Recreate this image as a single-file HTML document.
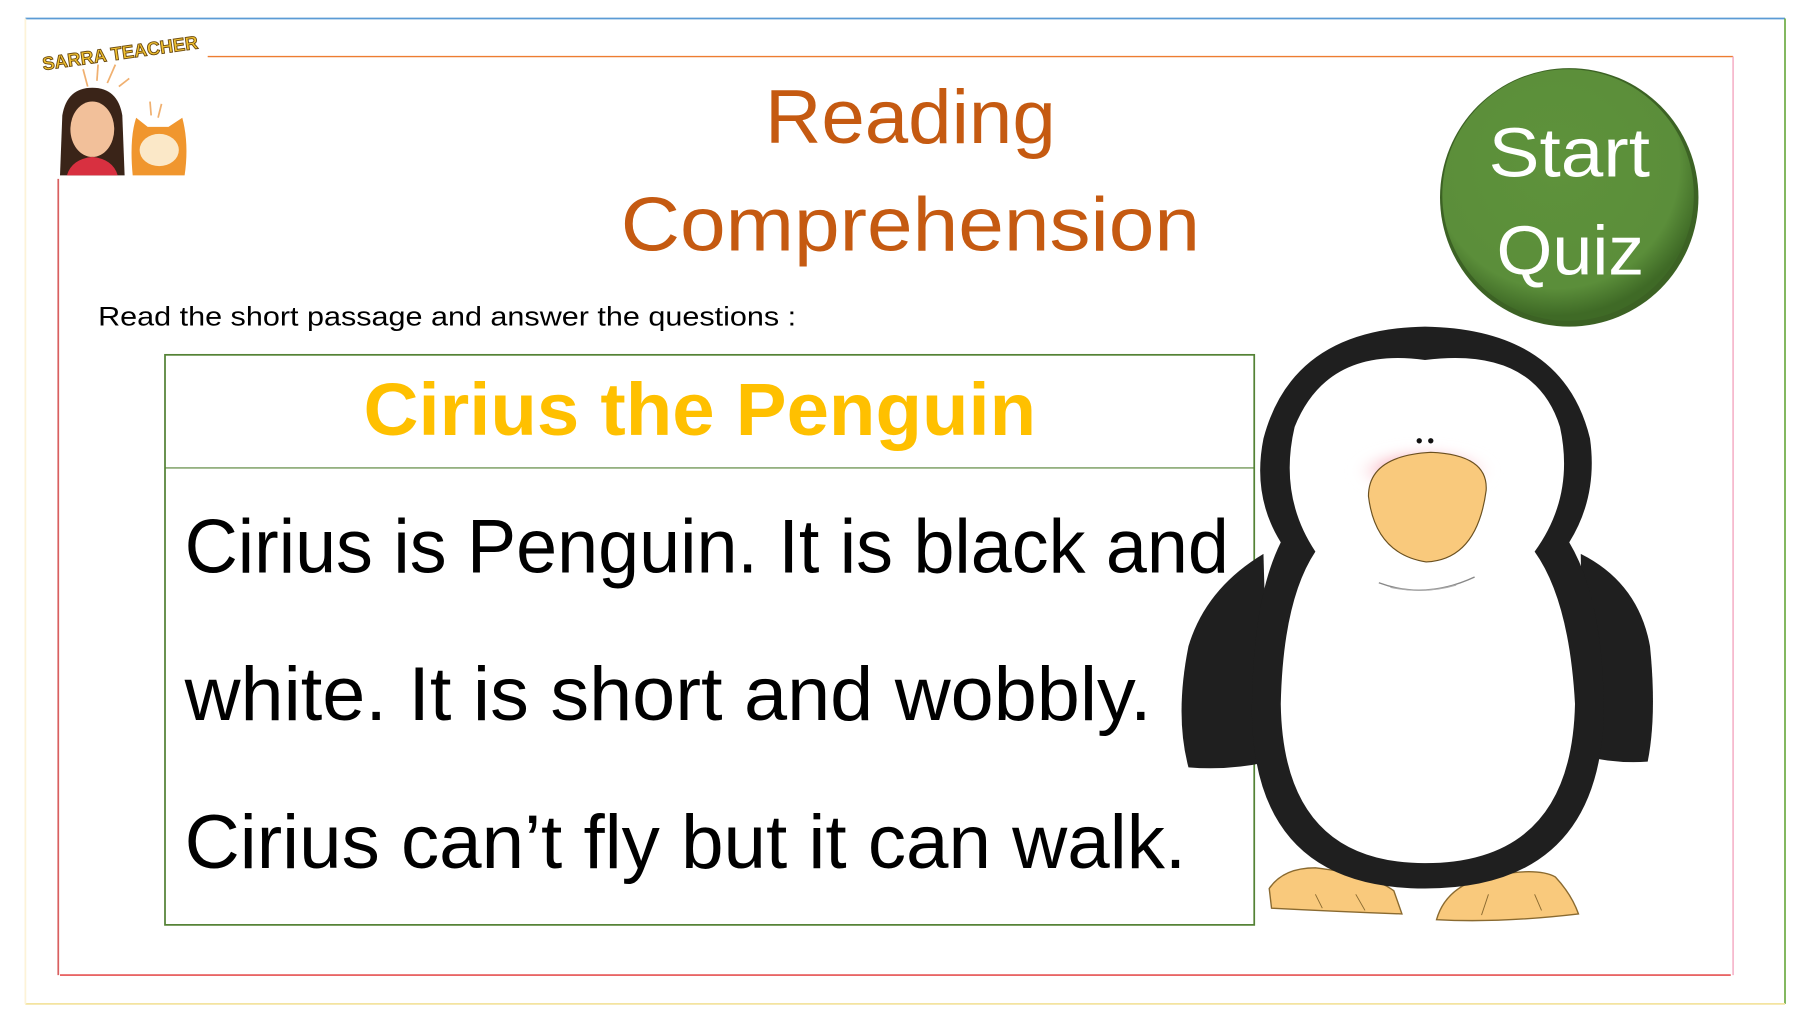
<!DOCTYPE html>
<html><head><meta charset="utf-8"><style>
html,body{margin:0;padding:0;background:#fff;}
svg{display:block;}
text{font-family:"Liberation Sans",sans-serif;}
</style></head><body>
<svg width="1800" height="1012" viewBox="0 0 1560 877" preserveAspectRatio="none" xmlns="http://www.w3.org/2000/svg">
<defs>
<radialGradient id="btn" cx="45%" cy="38%" r="60%">
<stop offset="0" stop-color="#5e923b"/><stop offset="0.82" stop-color="#5b8e3a"/><stop offset="1" stop-color="#3f6a26"/>
</radialGradient>
<radialGradient id="blush" cx="50%" cy="50%" r="50%">
<stop offset="0" stop-color="#f0607a" stop-opacity="1"/><stop offset="0.6" stop-color="#f7a0b0" stop-opacity="0.6"/><stop offset="1" stop-color="#ffffff" stop-opacity="0"/>
</radialGradient>
<filter id="bl" x="-30%" y="-60%" width="160%" height="220%"><feGaussianBlur stdDeviation="5"/></filter>
</defs>
<rect width="1560" height="877" fill="#fff"/>
<line x1="22" y1="16" x2="1547" y2="16" stroke="#5b9bd5" stroke-width="1.5"/>
<line x1="1547" y1="16" x2="1547" y2="870" stroke="#70ad47" stroke-width="1.5"/>
<line x1="22" y1="870" x2="1547" y2="870" stroke="#f4e4a0" stroke-width="1.5"/>
<line x1="22" y1="16" x2="22" y2="870" stroke="#fdf3d8" stroke-width="1.5"/>
<line x1="180" y1="49" x2="1502" y2="49" stroke="#ed7d31" stroke-width="1.2"/>
<line x1="1502" y1="49" x2="1502" y2="845" stroke="#f4a6c0" stroke-width="1.2"/>
<line x1="52" y1="845" x2="1500" y2="845" stroke="#e03030" stroke-width="1.2"/>
<line x1="50.5" y1="155" x2="50.5" y2="845" stroke="#d96060" stroke-width="1.5"/>
<text x="36" y="52" font-size="16" font-weight="bold" fill="#f2c230" stroke="#6b4a10" stroke-width="0.8" transform="rotate(-8 100 45)" textLength="136" lengthAdjust="spacingAndGlyphs">SARRA TEACHER</text>
<g stroke="#f0b070" stroke-width="1.5"><line x1="72" y1="60" x2="76" y2="75"/><line x1="85" y1="56" x2="84" y2="70"/><line x1="100" y1="56" x2="93" y2="72"/><line x1="112" y1="68" x2="103" y2="75"/><line x1="130" y1="88" x2="131" y2="100"/><line x1="140" y1="90" x2="137" y2="102"/></g>
<path d="M52 152 L54 100 Q58 76 80 76 Q102 76 106 100 L108 152 Z" fill="#3a2418"/>
<ellipse cx="80" cy="112" rx="19" ry="24" fill="#f2c09a"/>
<path d="M58 152 Q62 138 80 136 Q98 138 102 152 Z" fill="#d83040"/>
<path d="M115 152 Q112 120 118 102 L128 110 L146 110 L158 102 Q164 125 160 152 Z" fill="#f0962e"/>
<ellipse cx="138" cy="130" rx="17" ry="14" fill="#fbe8c8"/>
<text x="663" y="124" font-size="66" fill="#c55a11" textLength="252" lengthAdjust="spacingAndGlyphs">Reading</text>
<text x="538" y="217" font-size="66" fill="#c55a11" textLength="502" lengthAdjust="spacingAndGlyphs">Comprehension</text>
<ellipse cx="1360" cy="171" rx="112" ry="112" fill="#3c6224"/>
<ellipse cx="1359" cy="169" rx="109" ry="109" fill="url(#btn)"/>
<text x="1290" y="153" font-size="60" fill="#fff" textLength="140" lengthAdjust="spacingAndGlyphs">Start</text>
<text x="1297" y="238" font-size="60" fill="#fff" textLength="128" lengthAdjust="spacingAndGlyphs">Quiz</text>
<text x="85" y="282" font-size="23" fill="#000" textLength="605" lengthAdjust="spacingAndGlyphs">Read the short passage and answer the questions :</text>
<rect x="143" y="307.5" width="944" height="494" fill="none" stroke="#548235" stroke-width="1.5"/>
<line x1="143" y1="405.5" x2="1087" y2="405.5" stroke="#548235" stroke-width="1"/>
<text x="315" y="377" font-size="64" font-weight="bold" fill="#ffc000" textLength="583" lengthAdjust="spacingAndGlyphs">Cirius the Penguin</text>
<text x="160" y="496" font-size="66" fill="#000" textLength="905" lengthAdjust="spacingAndGlyphs">Cirius is Penguin. It is black and</text>
<text x="160" y="624" font-size="66" fill="#000" textLength="838" lengthAdjust="spacingAndGlyphs">white. It is short and wobbly.</text>
<text x="160" y="752" font-size="66" fill="#000" textLength="868" lengthAdjust="spacingAndGlyphs">Cirius can’t fly but it can walk.</text>
<g>
<path d="M1100 770 Q1112 752 1140 752 Q1190 758 1208 772 L1215 792 Q1160 790 1102 787 Z" fill="#f9c97c" stroke="#8a6a30" stroke-width="1.2"/>
<path d="M1245 797 Q1252 772 1280 762 Q1330 750 1348 760 Q1362 775 1368 792 Q1300 800 1245 797 Z" fill="#f9c97c" stroke="#8a6a30" stroke-width="1.2"/>
<g stroke="#8a6a30" stroke-width="0.8" fill="none"><path d="M1140 775 l6 12"/><path d="M1175 775 l8 14"/><path d="M1290 775 l-6 18"/><path d="M1330 775 l6 14"/></g>
<path d="M1095 480 Q1045 510 1030 560 Q1018 620 1030 665 Q1065 668 1100 660 Z" fill="#1f1f1f"/>
<path d="M1370 480 Q1420 505 1430 560 Q1436 620 1428 660 Q1400 662 1372 655 Z" fill="#1f1f1f"/>
<path d="M1235 283 Q1120 285 1095 380 Q1085 430 1110 470 Q1085 520 1085 620 Q1088 770 1235 770 Q1385 770 1390 620 Q1390 520 1360 470 Q1385 430 1378 380 Q1355 285 1235 283 Z" fill="#1f1f1f"/>
<path d="M1235 312 Q1150 300 1122 370 Q1108 430 1140 478 Q1112 520 1110 610 Q1112 748 1235 748 Q1362 748 1365 610 Q1360 520 1330 478 Q1365 430 1352 370 Q1330 300 1235 312 Z" fill="#fff"/>
<ellipse cx="1234" cy="408" rx="62" ry="20" fill="url(#blush)" filter="url(#bl)"/>
<path d="M1186 430 Q1186 395 1240 392 Q1290 394 1288 425 Q1280 485 1236 487 Q1192 480 1186 430 Z" fill="#f9c97c" stroke="#6a5020" stroke-width="1"/>
<circle cx="1230" cy="382" r="2.3" fill="#111"/><circle cx="1240" cy="382" r="2.3" fill="#111"/>
<path d="M1195 505 Q1235 520 1278 500" fill="none" stroke="#888" stroke-width="1.2"/>
<path d="M1205 509 Q1235 515 1262 507" fill="none" stroke="#aaa" stroke-width="1"/>
</g>
</svg>
</body></html>
